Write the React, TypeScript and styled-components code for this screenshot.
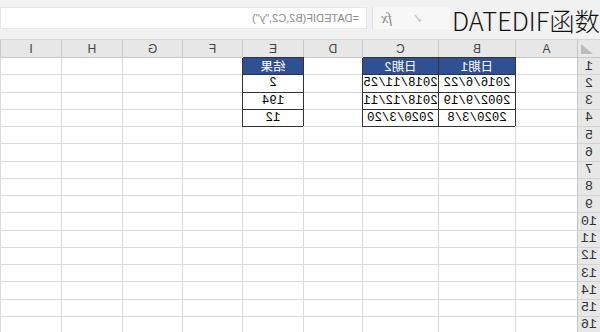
import React from "react";
import styled, { createGlobalStyle } from "styled-components";

const Global = createGlobalStyle`
  html, body { margin: 0; padding: 0; background: #fff; }
  body { width: 600px; height: 332px; overflow: hidden; }
`;

const Stage = styled.div`
  position: relative;
  width: 600px;
  height: 332px;
  overflow: hidden;
  background: #fff;
`;

const Mirror = styled.div`
  display: flex;
  flex-direction: column;
  width: 600px;
  transform: scaleX(-1);
`;

const FormulaBar = styled.div`
  display: flex;
  align-items: stretch;
  height: 40px;
  padding: 7px 0 10px;
  box-sizing: border-box;
  background: #f1f1f1;
  border-bottom: 1px solid #d6d6d6;
`;

const NameBox = styled.div`
  width: 138px;
  background: #fff;
  border: 1px solid #e2e2e2;
  box-sizing: border-box;
`;

const Tools = styled.div`
  display: flex;
  align-items: center;
  gap: 20px;
  width: 88px;
  margin: 0 5px 0 2px;
  padding-left: 36px;
  box-sizing: border-box;
  background: #f7f7f7;
  border-left: 1px solid #e0e0e0;
  border-right: 1px solid #e0e0e0;
`;

const Tool = styled.span<{ $size: number; $italic?: boolean }>`
  font-size: ${(p) => p.$size}px;
  font-style: ${(p) => (p.$italic ? "italic" : "normal")};
  font-family: ${(p) => (p.$italic ? '"Liberation Serif", serif' : '"DejaVu Sans", sans-serif')};
  color: ${(p) => (p.$italic ? "#8a8a8a" : "#c0c0c0")};
  line-height: 1;
`;

const Input = styled.div`
  flex: 1;
  display: flex;
  align-items: center;
  padding-left: 7px;
  background: #fff;
  border: 1px solid #e6e6e6;
  font-family: "Liberation Sans", sans-serif;
  font-size: 11px;
  color: #8c8c8c;
`;

const Sheet = styled.div`
  display: grid;
  grid-template-columns: 23px 62px 77px 76px 59px 61px 60px 60px 61px 61px;
  grid-template-rows: 18px;
  grid-auto-rows: 17.25px;
`;

const Corner = styled.div`
  position: relative;
  background: #e7e7e7;
  border-right: 1px solid #c6c6c6;
  border-bottom: 1px solid #c6c6c6;
  &::after {
    content: "";
    position: absolute;
    right: 3px;
    bottom: 3px;
    width: 0;
    height: 0;
    border-left: 12px solid transparent;
    border-bottom: 10px solid #bdbdbd;
  }
`;

const ColHead = styled.div`
  display: flex;
  align-items: center;
  justify-content: center;
  background: #e7e7e7;
  border-right: 1px solid #cacaca;
  border-bottom: 1px solid #c6c6c6;
  font-family: "Liberation Sans", sans-serif;
  font-size: 12px;
  color: #444;
`;

const RowHead = styled.div`
  display: flex;
  align-items: center;
  justify-content: center;
  background: #e7e7e7;
  border-right: 1px solid #c6c6c6;
  border-bottom: 1px solid #d2d2d2;
  font-family: "Liberation Mono", monospace;
  font-size: 13.5px;
  color: #333;
`;

const Cell = styled.div<{ $box?: boolean; $head?: boolean }>`
  display: flex;
  align-items: center;
  justify-content: center;
  box-sizing: border-box;
  background: ${(p) => (p.$head ? "#2f5092" : "#fff")};
  border-right: 1px solid ${(p) => (p.$box ? "#333" : "#dadada")};
  border-bottom: 1px solid ${(p) => (p.$box ? "#333" : "#dadada")};
  box-shadow: ${(p) => (p.$box ? "-1px -1px 0 #333" : "none")};
  font-family: "Liberation Mono", "Noto Sans CJK SC", monospace;
  font-size: 12.4px;
  color: ${(p) => (p.$head ? "#fff" : "#000")};
  white-space: nowrap;
`;

const Title = styled.div`
  position: absolute;
  top: 3px;
  right: 0;
  padding-left: 2px;
  font-family: "Noto Sans CJK SC", sans-serif;
  font-weight: 300;
  font-size: 25.4px;
  line-height: 34px;
  color: #111;
  background: #f1f1f1;
  white-space: nowrap;
`;

const cols = ["A", "B", "C", "D", "E", "F", "G", "H", "I"];

type CellData = { text?: string; box?: boolean; head?: boolean };

const tableData: Record<number, Record<string, CellData>> = {
  1: {
    B: { text: "日期1", box: true, head: true },
    C: { text: "日期2", box: true, head: true },
    E: { text: "结果", box: true, head: true },
  },
  2: {
    B: { text: "2016/6/22", box: true },
    C: { text: "2018/11/25", box: true },
    E: { text: "2", box: true },
  },
  3: {
    B: { text: "2002/9/19", box: true },
    C: { text: "2018/12/11", box: true },
    E: { text: "194", box: true },
  },
  4: {
    B: { text: "2020/3/8", box: true },
    C: { text: "2020/3/20", box: true },
    E: { text: "12", box: true },
  },
};

export default function App() {
  const rows = Array.from({ length: 17 }, (_, i) => i + 1);
  return (
    <Stage>
      <Global />
      <Mirror>
        <FormulaBar>
          <NameBox />
          <Tools>
            <Tool $size={13}>✓</Tool>
            <Tool $size={15} $italic>
              fx
            </Tool>
          </Tools>
          <Input>=DATEDIF(B2,C2,"y")</Input>
        </FormulaBar>
        <Sheet>
          <Corner />
          {cols.map((c) => (
            <ColHead key={c}>{c}</ColHead>
          ))}
          {rows.map((r) => (
            <React.Fragment key={r}>
              <RowHead>{r}</RowHead>
              {cols.map((c) => {
                const d = tableData[r]?.[c];
                return (
                  <Cell key={c} $box={d?.box} $head={d?.head}>
                    {d?.text}
                  </Cell>
                );
              })}
            </React.Fragment>
          ))}
        </Sheet>
      </Mirror>
      <Title>DATEDIF函数</Title>
    </Stage>
  );
}
